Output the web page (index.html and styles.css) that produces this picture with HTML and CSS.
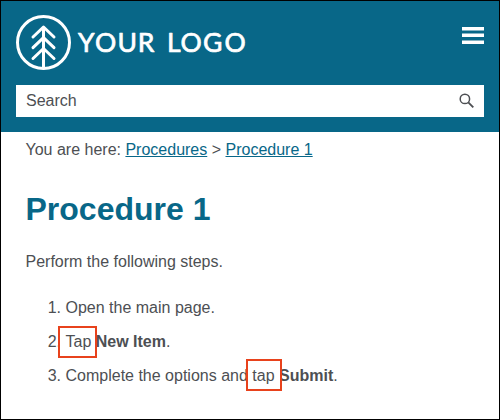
FILE: index.html
```html
<!DOCTYPE html>
<html lang="en">
<head>
<meta charset="utf-8">
<title>Procedure 1</title>
<link rel="stylesheet" href="styles.css">
</head>
<body>
<div class="page">
  <header class="header">
    <div class="bar">
      <svg class="logo" width="232" height="58" viewBox="0 0 232 58" role="img" aria-label="Your Logo">
        <g fill="none" stroke="#fff" stroke-width="3" stroke-linecap="round" stroke-linejoin="round">
          <circle cx="27.5" cy="28.5" r="26"/>
          <path d="M27.5 54V13M17 23l10.5-10L38 23M17 33.700l10.500-10L38 33.700M17 44.500l10.500-10L38 44.500"/>
        </g>
        <text class="logo-text" y="37.800" x="62 79 101.500 121.800 145 151 164.500 187 208.500">YOUR LOGO</text>
      </svg>
      <div class="menu"><span></span><span></span><span></span></div>
    </div>
    <div class="search">
      <span>Search</span>
      <svg width="16" height="16" viewBox="0 0 16 16" fill="none" stroke="#4d4f53">
        <circle cx="5.900" cy="5.900" r="4.700" stroke-width="1.500"/>
        <path d="M9.300 9.300l5 5" stroke-width="1.900"/>
      </svg>
    </div>
  </header>
  <main class="content">
    <nav class="crumbs">You are here: <a href="#">Procedures</a> &gt; <a href="#">Procedure 1</a></nav>
    <h1>Procedure 1</h1>
    <p>Perform the following steps.</p>
    <ol>
      <li>Open the main page.</li>
      <li><span class="mark first">Tap</span> <b>New Item</b>.</li>
      <li>Complete the options and <span class="mark second">tap</span> <b>Submit</b>.</li>
    </ol>
  </main>
</div>
</body>
</html>
```

FILE: styles.css
```css
*, *::after { box-sizing: border-box; }
body {
  margin: 0;
  font: 16px/24px "Liberation Sans", Arial, sans-serif;
  color: #4d4f53;
}
.page {
  width: 500px;
  height: 420px;
  border: 1px solid #000;
  background: #fff;
  overflow: hidden;
}
.header {
  height: 131px;
  padding: 13px 15px 0;
  background: #086788;
}
.bar {
  display: flex;
  justify-content: space-between;
  height: 71px;
}
.logo { display: block; }
.logo-text {
  font: 26.500px Lato, sans-serif;
  fill: #fff;
  stroke: #fff;
  stroke-width: 0.700px;
  stroke-linejoin: round;
}
.menu {
  display: flex;
  flex-direction: column;
  gap: 4px;
  width: 22px;
  padding-top: 13px;
}
.menu span {
  height: 3px;
  background: #fff;
  box-shadow: 0 -1px rgba(255, 255, 255, 0.5);
}
.menu span:first-child { box-shadow: 0 1px rgba(255, 255, 255, 0.5); }
.search {
  display: flex;
  align-items: center;
  justify-content: space-between;
  height: 32px;
  padding: 0 9px 0 10px;
  background: #fff;
}
.content { padding: 6px 24.500px 0; }
a { color: #086788; }
h1 {
  margin: 28px 0 0;
  font-size: 32px;
  line-height: 38px;
  color: #086788;
}
p { margin: 22px 0 0; }
ol {
  margin: 17px 0 0;
  padding-left: 40px;
  line-height: 34px;
}
.mark {
  position: relative;
  z-index: 1;
}
.mark::after {
  content: "";
  position: absolute;
  z-index: -1;
  height: 32px;
  border: 2px solid #e8421c;
  background: #fff;
}
.first::after {
  top: -7px;
  left: -7.500px;
  width: 39px;
}
.second::after {
  top: -8px;
  left: -6.500px;
  width: 36px;
}
```
